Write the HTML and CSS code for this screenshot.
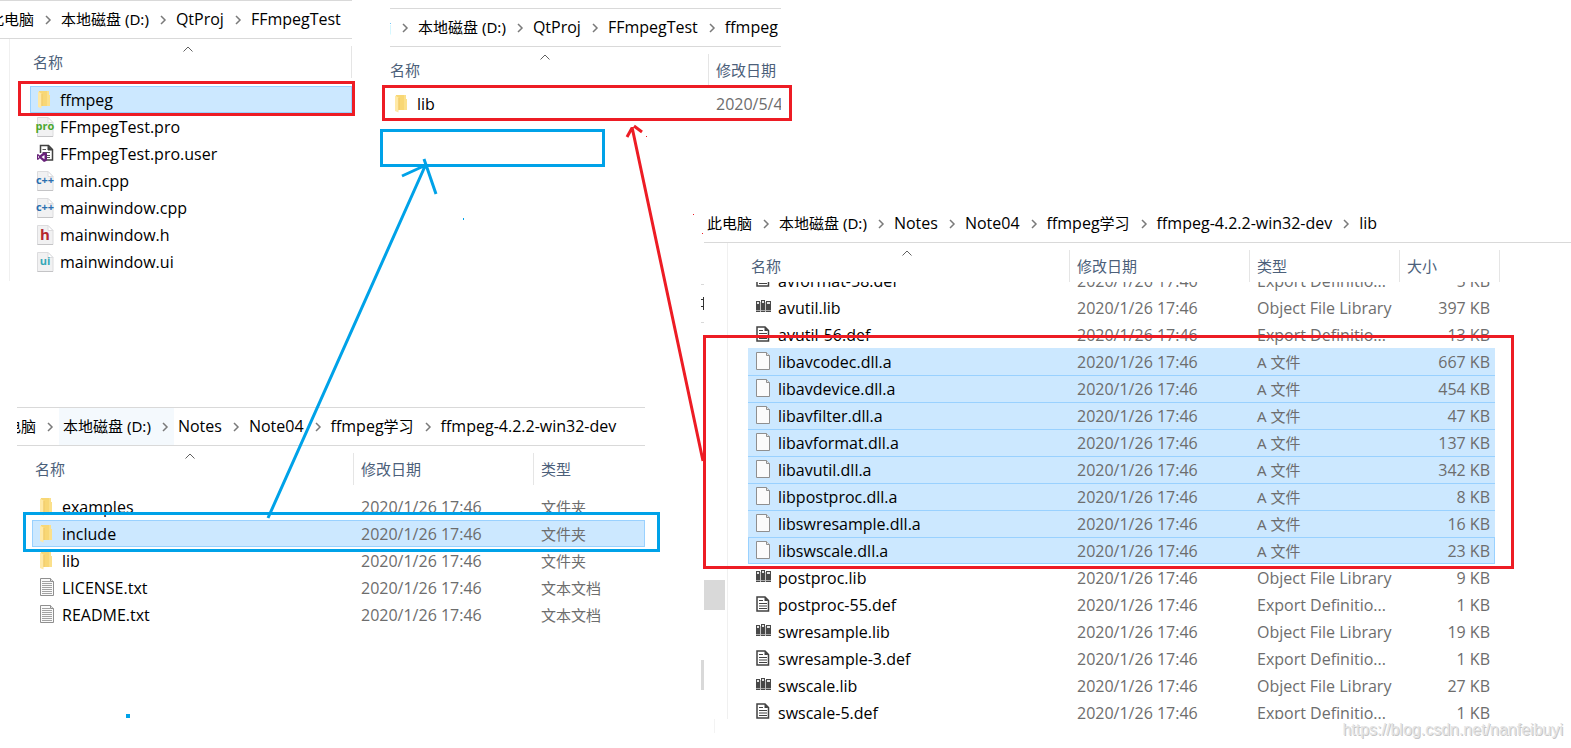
FILE: index.html
```html
<!DOCTYPE html>
<html lang="zh-CN">
<head>
<meta charset="utf-8">
<title>FFmpegTest</title>
<link rel="stylesheet" href="styles.css">
</head>
<body>
<svg class="defs" aria-hidden="true">
  <defs>
    <symbol id="i-folder" viewBox="0 0 18 20">
      <path d="M3 1h10v4h1v11H6l-3 1z" fill="#f8d775"/>
      <path d="M11 1h2v4h1v11h-3z" fill="#fbe08b"/>
      <path d="M2 1.500l3.500 2V18.500L2 17z" fill="#ffe9a6"/>
      <path d="M6 4v12" stroke="#efc968"/>
    </symbol>
    <symbol id="i-sheet" viewBox="0 0 18 20">
      <path d="M1.500.5h10.500l5 5v14H1.500z" fill="#f1f1f2" stroke="#dcdcde"/>
      <path d="M12 .5v5h5z" fill="#fff" stroke="#dcdcde"/>
      <path d="M1.500 19.500H17" stroke="#c4c4c6"/>
    </symbol>
    <symbol id="i-vs" viewBox="0 0 18 20">
      <path d="M4.500 9V1.500h8l4 4v10.500H11" fill="#fff" stroke="#424242" stroke-width="1.500"/>
      <path d="M12 1.500v4.500h4.500" fill="#424242" stroke="#424242"/>
      <path d="M6.500 5.500H10M6.500 8.500H14M10 11.500h4M11 13.500h3" stroke="#555"/>
      <path d="M8 8l3 1.300v7.400L8 18l-4.200-3.700L2 16l-1-.6v-5l1-.5 1.800 1.700zM8.500 11l-3 2 3 2.200zM2 11.800v2.400L3.200 13z" fill="#68217a" fill-rule="evenodd"/>
    </symbol>
    <symbol id="i-txt" viewBox="0 0 18 20">
      <path d="M2.500 .5h10l3 3v14h-13z" fill="#fafafa" stroke="#8f8f8f"/>
      <path d="M12.500 .5v3h3" fill="#ddd" stroke="#8f8f8f"/>
      <path d="M4 3.500h8M4 5.500h10M4 7.500h10M4 9.500h10M4 11.500h10M4 13.500h10M4 15.500h10" stroke="#a2a2a2"/>
    </symbol>
    <symbol id="i-blank" viewBox="0 0 18 20">
      <path d="M2.500 .5h10l3 3v14h-13z" fill="#fbfbfb" stroke="#8f8f8f"/>
      <path d="M12.500 .5v3h3" fill="#e6e6e6" stroke="#8f8f8f"/>
    </symbol>
    <symbol id="i-def" viewBox="0 0 18 20">
      <path d="M3 2h8l3.500 3.500V16H3z" fill="#fff" stroke="#424242" stroke-width="1.500"/>
      <path d="M10.500 2v4h4z" fill="#424242"/>
      <path d="M5 5.500h4M5 8.500h8M5 11h8M5 13.500h8" stroke="#424242"/>
    </symbol>
    <symbol id="i-lib" viewBox="0 0 18 20">
      <path d="M2 3h4v11H2zM7 2h4v12H7zM12 3h5v11h-5z" fill="#484848"/>
      <path d="M3 4h2v2H3zM8 3h2v2H8zM13 4h3v2h-3z" fill="#e4e4e4"/>
      <path d="M2 12h4v1H2zM7 12h4v1H7zM12 12h5v1h-5z" fill="#a8a8a8"/>
      <path d="M6.500 4v10M11.500 4v10" stroke="#c4c4c4"/>
    </symbol>
    <symbol id="i-sep" viewBox="0 0 8 10"><path d="M2 1l4 4-4 4" fill="none" stroke="#7a7a7a" stroke-width="1.500"/></symbol>
    <symbol id="i-sort" viewBox="0 0 10 6"><path d="M.5 5.500L5 1l4.500 4.500" fill="none" stroke="#606060"/></symbol>
  </defs>
</svg>

<main class="board">

  <section class="window project">
    <nav class="crumbs">
      <a class="han" href="#">此电脑</a><svg class="sep"><use href="#i-sep"/></svg>
      <a class="han" href="#">本地磁盘 (D:)</a><svg class="sep"><use href="#i-sep"/></svg>
      <a href="#">QtProj</a><svg class="sep"><use href="#i-sep"/></svg>
      <a href="#">FFmpegTest</a>
    </nav>
    <table class="files">
      <thead><tr><th>名称<svg class="sort"><use href="#i-sort"/></svg></th></tr></thead>
      <tbody>
        <tr class="selected current"><td><svg class="icon"><use href="#i-folder"/></svg>ffmpeg</td></tr>
        <tr><td><span class="badge pro"><svg class="icon"><use href="#i-sheet"/></svg><b>pro</b></span>FFmpegTest.pro</td></tr>
        <tr><td><svg class="icon"><use href="#i-vs"/></svg>FFmpegTest.pro.user</td></tr>
        <tr><td><span class="badge cpp"><svg class="icon"><use href="#i-sheet"/></svg><b>c++</b></span>main.cpp</td></tr>
        <tr><td><span class="badge cpp"><svg class="icon"><use href="#i-sheet"/></svg><b>c++</b></span>mainwindow.cpp</td></tr>
        <tr><td><span class="badge hdr"><svg class="icon"><use href="#i-sheet"/></svg><b>h</b></span>mainwindow.h</td></tr>
        <tr><td><span class="badge ui"><svg class="icon"><use href="#i-sheet"/></svg><b>ui</b></span>mainwindow.ui</td></tr>
      </tbody>
    </table>
  </section>

  <section class="window target">
    <nav class="crumbs">
      <a class="han" href="#">此电脑</a><svg class="sep"><use href="#i-sep"/></svg>
      <a class="han" href="#">本地磁盘 (D:)</a><svg class="sep"><use href="#i-sep"/></svg>
      <a href="#">QtProj</a><svg class="sep"><use href="#i-sep"/></svg>
      <a href="#">FFmpegTest</a><svg class="sep"><use href="#i-sep"/></svg>
      <a href="#">ffmpeg</a>
    </nav>
    <table class="files">
      <thead><tr><th>名称<svg class="sort"><use href="#i-sort"/></svg></th><th>修改日期</th></tr></thead>
      <tbody>
        <tr><td><svg class="icon"><use href="#i-folder"/></svg>lib</td><td>2020/5/4</td></tr>
      </tbody>
    </table>
  </section>

  <section class="window dev">
    <nav class="crumbs">
      <a class="han" href="#">此电脑</a><svg class="sep"><use href="#i-sep"/></svg>
      <span class="hover"><a class="han" href="#">本地磁盘 (D:)</a><svg class="sep"><use href="#i-sep"/></svg></span>
      <a href="#">Notes</a><svg class="sep"><use href="#i-sep"/></svg>
      <a href="#">Note04</a><svg class="sep"><use href="#i-sep"/></svg>
      <a href="#">ffmpeg<span class="han">学习</span></a><svg class="sep"><use href="#i-sep"/></svg>
      <a href="#">ffmpeg-4.2.2-win32-dev</a>
    </nav>
    <table class="files">
      <thead><tr><th>名称<svg class="sort"><use href="#i-sort"/></svg></th><th>修改日期</th><th>类型</th></tr></thead>
      <tbody>
        <tr><td><svg class="icon"><use href="#i-folder"/></svg>examples</td><td>2020/1/26 17:46</td><td class="han">文件夹</td></tr>
        <tr class="selected current"><td><svg class="icon"><use href="#i-folder"/></svg>include</td><td>2020/1/26 17:46</td><td class="han">文件夹</td></tr>
        <tr><td><svg class="icon"><use href="#i-folder"/></svg>lib</td><td>2020/1/26 17:46</td><td class="han">文件夹</td></tr>
        <tr><td><svg class="icon"><use href="#i-txt"/></svg>LICENSE.txt</td><td>2020/1/26 17:46</td><td class="han">文本文档</td></tr>
        <tr><td><svg class="icon"><use href="#i-txt"/></svg>README.txt</td><td>2020/1/26 17:46</td><td class="han">文本文档</td></tr>
      </tbody>
    </table>
  </section>

  <section class="window libs">
    <nav class="crumbs">
      <a class="han" href="#">此电脑</a><svg class="sep"><use href="#i-sep"/></svg>
      <a class="han" href="#">本地磁盘 (D:)</a><svg class="sep"><use href="#i-sep"/></svg>
      <a href="#">Notes</a><svg class="sep"><use href="#i-sep"/></svg>
      <a href="#">Note04</a><svg class="sep"><use href="#i-sep"/></svg>
      <a href="#">ffmpeg<span class="han">学习</span></a><svg class="sep"><use href="#i-sep"/></svg>
      <a href="#">ffmpeg-4.2.2-win32-dev</a><svg class="sep"><use href="#i-sep"/></svg>
      <a href="#">lib</a>
    </nav>
    <table class="files">
      <thead><tr><th>名称<svg class="sort"><use href="#i-sort"/></svg></th><th>修改日期</th><th>类型</th><th>大小</th></tr></thead>
      <tbody>
        <tr class="cut-top"><td><svg class="icon"><use href="#i-def"/></svg>avformat-58.def</td><td>2020/1/26 17:46</td><td>Export Definitio...</td><td>5 KB</td></tr>
        <tr><td><svg class="icon"><use href="#i-lib"/></svg>avutil.lib</td><td>2020/1/26 17:46</td><td>Object File Library</td><td>397 KB</td></tr>
        <tr><td><svg class="icon"><use href="#i-def"/></svg>avutil-56.def</td><td>2020/1/26 17:46</td><td>Export Definitio...</td><td>13 KB</td></tr>
        <tr class="selected"><td><svg class="icon"><use href="#i-blank"/></svg>libavcodec.dll.a</td><td>2020/1/26 17:46</td><td class="han">A 文件</td><td>667 KB</td></tr>
        <tr class="selected"><td><svg class="icon"><use href="#i-blank"/></svg>libavdevice.dll.a</td><td>2020/1/26 17:46</td><td class="han">A 文件</td><td>454 KB</td></tr>
        <tr class="selected"><td><svg class="icon"><use href="#i-blank"/></svg>libavfilter.dll.a</td><td>2020/1/26 17:46</td><td class="han">A 文件</td><td>47 KB</td></tr>
        <tr class="selected"><td><svg class="icon"><use href="#i-blank"/></svg>libavformat.dll.a</td><td>2020/1/26 17:46</td><td class="han">A 文件</td><td>137 KB</td></tr>
        <tr class="selected"><td><svg class="icon"><use href="#i-blank"/></svg>libavutil.dll.a</td><td>2020/1/26 17:46</td><td class="han">A 文件</td><td>342 KB</td></tr>
        <tr class="selected"><td><svg class="icon"><use href="#i-blank"/></svg>libpostproc.dll.a</td><td>2020/1/26 17:46</td><td class="han">A 文件</td><td>8 KB</td></tr>
        <tr class="selected"><td><svg class="icon"><use href="#i-blank"/></svg>libswresample.dll.a</td><td>2020/1/26 17:46</td><td class="han">A 文件</td><td>16 KB</td></tr>
        <tr class="selected current"><td><svg class="icon"><use href="#i-blank"/></svg>libswscale.dll.a</td><td>2020/1/26 17:46</td><td class="han">A 文件</td><td>23 KB</td></tr>
        <tr><td><svg class="icon"><use href="#i-lib"/></svg>postproc.lib</td><td>2020/1/26 17:46</td><td>Object File Library</td><td>9 KB</td></tr>
        <tr><td><svg class="icon"><use href="#i-def"/></svg>postproc-55.def</td><td>2020/1/26 17:46</td><td>Export Definitio...</td><td>1 KB</td></tr>
        <tr><td><svg class="icon"><use href="#i-lib"/></svg>swresample.lib</td><td>2020/1/26 17:46</td><td>Object File Library</td><td>19 KB</td></tr>
        <tr><td><svg class="icon"><use href="#i-def"/></svg>swresample-3.def</td><td>2020/1/26 17:46</td><td>Export Definitio...</td><td>1 KB</td></tr>
        <tr><td><svg class="icon"><use href="#i-lib"/></svg>swscale.lib</td><td>2020/1/26 17:46</td><td>Object File Library</td><td>27 KB</td></tr>
        <tr class="cut-bottom"><td><svg class="icon"><use href="#i-def"/></svg>swscale-5.def</td><td>2020/1/26 17:46</td><td>Export Definitio...</td><td>1 KB</td></tr>
      </tbody>
    </table>
  </section>

  <svg class="marks" width="1571" height="748" viewBox="0 0 1571 748" aria-hidden="true">
    <path d="M704 580h21v30h-21zM701 660h3v30h-3zM701 284h3v1h-3zM701 322h3v1h-3z" fill="#d9d9d9"/>
    <path d="M703.500 297v13M701 299.500h3M701 306.500h3" stroke="#333"/>
    <path d="M714.500 719v14" stroke="#f3f3f3"/>
    <g fill="none" stroke="#ed1c24" stroke-width="3">
      <rect x="19.500" y="82.500" width="334" height="32"/>
      <rect x="383.500" y="86.500" width="407" height="33"/>
      <rect x="704.500" y="336.500" width="808" height="231"/>
      <path d="M632 127L703 461M627 137l5-9M634 126l8 6"/>
    </g>
    <g fill="none" stroke="#00a2e8" stroke-width="3">
      <rect x="381.500" y="130.500" width="222" height="35"/>
      <rect x="24.500" y="513.500" width="634" height="37"/>
      <path d="M268 518L426 164M424 159l12 35M402 176l24-11"/>
    </g>
    <path d="M646 136h1v1h-1zM693 214h1v1h-1zM702 233h1v1h-1z" fill="#ed1c24"/>
    <path d="M463 218h1v2h-1zM126 714h4v4h-4z" fill="#00a2e8"/>
  </svg>

  <p class="watermark">https://blog.csdn.net/nanfeibuyi</p>
</main>
</body>
</html>
```

FILE: styles.css
```css
* { box-sizing: border-box; }

body {
  margin: 0;
  background: #fff;
  color: #000;
  font: 16px/27px "Open Sans", "Noto Sans CJK SC", sans-serif;
}

.defs { position: absolute; width: 0; height: 0; }

.board {
  position: relative;
  min-height: 100vh;
  overflow: hidden;
}

/* Explorer windows, placed freely on the board */
.window { position: absolute; overflow: hidden; }
.project { left: 0; top: 0; width: 352px; --cols: 1fr; --sort: 178px; --head-gap: 8px; }
.target { left: 390px; top: 8px; width: 391px; --cols: 318px 1fr; --sort: 155px; --head-gap: 4px; }
.dev { left: 17px; top: 407px; width: 628px; --cols: 336px 180px 1fr; --sort: 173px; --head-gap: 8px; }
.libs { left: 704px; top: 205px; right: 0; --cols: 341px 180px 150px 101px; --sort: 179px; --head-gap: 0px; }

.crumbs {
  display: flex;
  align-items: center;
  height: 39px;
  border-top: 1px solid #d9d9d9;
  border-bottom: 1px solid #d9d9d9;
  white-space: nowrap;
}
.crumbs a { color: #000; text-decoration: none; }
.han, .files th {
  font-family: "Noto Sans", "Noto Sans CJK SC", sans-serif;
  font-size: 15px;
}
.sep { flex: none; width: 8px; height: 10px; margin: 0 9px 0 10px; }
.hover {
  display: flex;
  align-items: center;
  align-self: stretch;
  margin: 0 4px 0 -4px;
  padding-left: 4px;
  background: #f4f9fd;
}
.hover .sep { margin-right: 5px; }

.project .crumbs > a:first-child { margin-left: -11px; }
.target .crumbs > a:first-child { margin-left: -44px; }
.dev .crumbs > a:first-child { margin-left: -26px; }
.libs .crumbs { border-top: 0; height: 38px; padding-left: 3px; }

.files { display: block; }
.files thead, .files tbody { display: block; }
.files tr { display: grid; grid-template-columns: var(--cols); }

.files thead { padding: 7px 0 var(--head-gap); }
.files th {
  position: relative;
  height: 32px;
  padding: 4px 0 0 7px;
  border-left: 1px solid #e5e5e5;
  color: #4c607a;
  font-weight: 400;
  line-height: 24px;
  text-align: left;
}
.files th:first-child { border-left: 0; }
.sort {
  position: absolute;
  left: calc(var(--sort) - 5px);
  top: 0;
  width: 10px;
  height: 6px;
}

.files td {
  display: flex;
  align-items: center;
  height: 27px;
  padding: 2px 0 0 8px;
  overflow: hidden;
  color: #6d6d6d;
  white-space: nowrap;
}
.files td:first-child { color: #000; }
.files td.han { padding-top: 1px; }
.icon { flex: none; width: 18px; height: 20px; margin: 0 6px 2px 0; }

.selected { background: #cce8ff; box-shadow: inset 0 1px #99d1ff; }
.selected.current { box-shadow: inset 0 0 0 1px #99d1ff; }
:not(.selected) + .selected:not(.current) { box-shadow: none; }

.project .files { margin-left: 9px; padding-bottom: 6px; border-left: 1px solid #f0f0f0; }
.project thead th { padding-left: 23px; border-right: 1px solid #e5e5e5; }
.project tbody tr { margin-left: 20px; }
.project td:first-child { padding-left: 6px; }

.target th:first-child { padding-left: 0; }
.target td:first-child { padding-left: 3px; }

.dev th:first-child { padding-left: 18px; }
.dev tbody tr { margin-left: 15px; grid-template-columns: 321px 180px 1fr; }
.dev td:first-child { padding-left: 6px; }

.libs .files { margin-left: 23px; border-left: 1px solid #f0f0f0; }
.libs thead th:first-child { padding-left: 23px; }
.libs thead th:last-child { border-right: 1px solid #e5e5e5; }
.libs tbody tr { width: 747px; margin-left: 20px; grid-template-columns: 321px 180px 150px 1fr; }
.libs td:first-child { padding-left: 6px; }
.libs td:last-child { justify-content: flex-end; padding-right: 5px; }
.libs .cut-top td { height: 12px; padding-top: 0; align-items: flex-end; line-height: 25px; }
.cut-top .icon { margin-bottom: 4px; }
.libs .cut-bottom td { height: 20px; padding-top: 1px; align-items: flex-start; }
.cut-bottom .icon { margin-top: 2px; }

.badge { position: relative; display: flex; }
.badge b {
  position: absolute;
  inset: 0 4px 0 -2px;
  font: 700 11px/17px "Open Sans", sans-serif;
  text-align: center;
}
.pro b { color: #4ba82e; }
.cpp b { color: #2b6fb0; }
.hdr b { color: #b5272d; font-size: 15px; line-height: 19px; }
.ui b { color: #35a8b8; }

.marks { position: absolute; left: 0; top: 0; }

.watermark {
  position: absolute;
  right: 8px;
  bottom: 5px;
  margin: 0;
  color: #e4e4e4;
  font: 16px/27px "Liberation Sans", Arial, sans-serif;
  text-shadow: 1px 1px #c6c6c6;
}
```
